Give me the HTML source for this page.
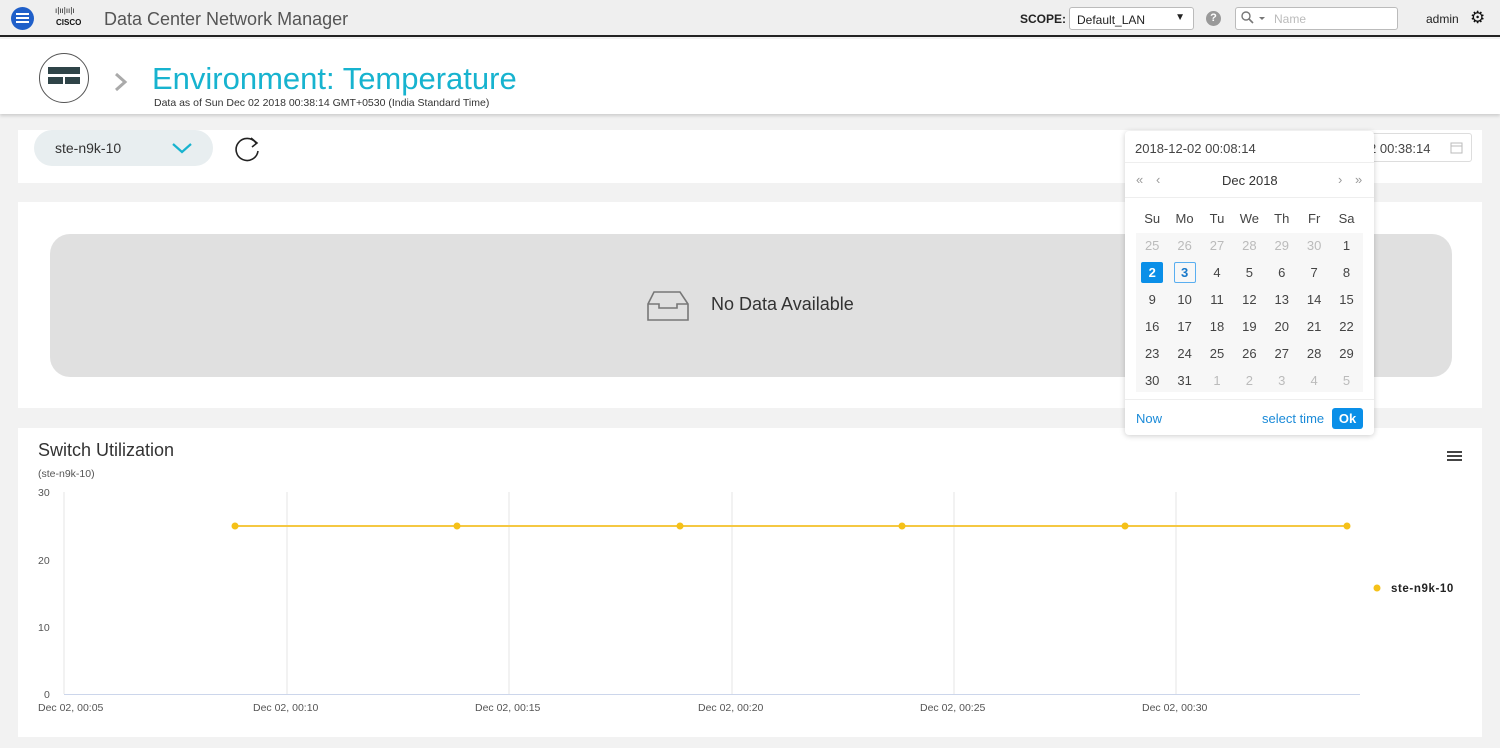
<!DOCTYPE html>
<html><head><meta charset="utf-8"><style>
*{box-sizing:border-box;margin:0;padding:0}
body{width:1500px;height:748px;background:#f2f2f2;font-family:"Liberation Sans",sans-serif;position:relative;overflow:hidden;color:#333}
.abs{position:absolute}
.card{position:absolute;background:#fff}
.cal td{width:32.4px;height:27px;text-align:center;font-size:13px;color:#444}
.cal .g{color:#bbb}
</style></head><body>
<!-- header -->
<div class="abs" style="left:0;top:0;width:1500px;height:37px;background:#efefef;border-bottom:2px solid #222"></div>
<div class="abs" style="left:11px;top:7px;width:23px;height:23px;border-radius:50%;background:#1f5fc9"></div>
<div class="abs" style="left:16px;top:13px;width:13px;height:2px;background:#fff;box-shadow:0 4px 0 #fff,0 8px 0 #fff"></div>
<div class="abs" style="left:55px;top:7px;font-size:8px;letter-spacing:0px;color:#111;line-height:8px">ı|ıı|ıı|ı</div>
<div class="abs" style="left:56px;top:18px;font-size:8px;font-weight:bold;color:#111">CISCO</div>
<div class="abs" style="left:104px;top:9px;font-size:18px;color:#555">Data Center Network Manager</div>
<div class="abs" style="left:1020px;top:12px;font-size:12px;font-weight:bold;color:#222">SCOPE:</div>
<div class="abs" style="left:1069px;top:7px;width:125px;height:23px;border:1px solid #bbb;background:#fff;border-radius:3px;font-size:12px;padding:5px 7px;color:#222">Default_LAN<span style="position:absolute;right:8px;top:4px;font-size:10px">▼</span></div>
<div class="abs" style="left:1206px;top:11px;width:15px;height:15px;border-radius:50%;background:#999;color:#fff;font-size:11px;font-weight:bold;text-align:center;line-height:15px">?</div>
<div class="abs" style="left:1235px;top:7px;width:163px;height:23px;border:1px solid #bbb;background:#fff;border-radius:3px;font-size:12px;color:#bbb;padding:4px 0 0 38px">Name</div>
<svg class="abs" style="left:1241px;top:11px" width="28" height="14"><circle cx="5" cy="5" r="4" fill="none" stroke="#777" stroke-width="1.4"/><path d="M8 8l4 4" stroke="#777" stroke-width="1.6"/><path d="M18 6h6l-3 3z" fill="#777"/></svg>
<div class="abs" style="left:1426px;top:12px;font-size:12px;color:#222">admin</div>
<div class="abs" style="left:1470px;top:8px;font-size:17px;color:#111">⚙</div>
<!-- title band -->
<div class="abs" style="left:0;top:39px;width:1500px;height:75px;background:#fff;box-shadow:0 2px 3px rgba(0,0,0,.15)"></div>
<div class="abs" style="left:39px;top:53px;width:50px;height:50px;border-radius:50%;border:1px solid #555;background:#fff"></div>
<div class="abs" style="left:48px;top:67px;width:32px;height:7px;background:#2f4448"></div>
<div class="abs" style="left:48px;top:77px;width:15px;height:7px;background:#2f4448"></div>
<div class="abs" style="left:65px;top:77px;width:15px;height:7px;background:#2f4448"></div>
<svg class="abs" style="left:113px;top:71px" width="16" height="22"><path d="M3 3l9 8-9 8" fill="none" stroke="#aaa" stroke-width="3"/></svg>
<div class="abs" style="left:152px;top:61px;font-size:31px;color:#17b3cf">Environment: Temperature</div>
<div class="abs" style="left:154px;top:97px;font-size:10.5px;color:#333">Data as of Sun Dec 02 2018 00:38:14 GMT+0530 (India Standard Time)</div>
<!-- card1 -->
<div class="card" style="left:18px;top:130px;width:1464px;height:53px"></div>
<div class="abs" style="left:34px;top:130px;width:179px;height:36px;border-radius:18px;background:#e8eef0"></div>
<div class="abs" style="left:55px;top:140px;font-size:14px;color:#333">ste-n9k-10</div>
<svg class="abs" style="left:171px;top:141px" width="22" height="14"><path d="M2 3l9 8 9-8" fill="none" stroke="#17b3cf" stroke-width="2.2"/></svg>
<svg class="abs" style="left:232px;top:135px" width="32" height="30"><path d="M24 8A11 11 0 1 0 26 16" fill="none" stroke="#222" stroke-width="1.6"/><path d="M19 3l6 5-5 4" fill="none" stroke="#222" stroke-width="1.6"/></svg>
<div class="abs" style="left:1240px;top:133px;width:232px;height:29px;border:1px solid #ddd;border-radius:3px;background:#fff;font-size:13px;color:#444;padding:7px 0 0 128px">2 00:38:14</div>
<svg class="abs" style="left:1450px;top:141px" width="13" height="13"><rect x="1" y="2" width="11" height="10" fill="none" stroke="#bbb"/><path d="M1 5h11" stroke="#bbb"/></svg>
<!-- card2 -->
<div class="card" style="left:18px;top:202px;width:1464px;height:206px"></div>
<div class="abs" style="left:50px;top:234px;width:1402px;height:143px;border-radius:20px;background:#e0e0e0"></div>
<svg class="abs" style="left:645px;top:290px" width="46" height="32"><path d="M9 2h26l8 12v16H3V14z M3 14h11v4h18v-4h11" fill="none" stroke="#777" stroke-width="1.6"/></svg>
<div class="abs" style="left:711px;top:294px;font-size:18px;color:#333">No Data Available</div>
<!-- card3 chart -->
<div class="card" style="left:18px;top:428px;width:1464px;height:309px"></div>
<div class="abs" style="left:38px;top:440px;font-size:18px;color:#333">Switch Utilization</div>
<div class="abs" style="left:38px;top:468px;font-size:10.5px;color:#555">(ste-n9k-10)</div>
<svg class="abs" style="left:0;top:480px" width="1500" height="240" font-family="Liberation Sans" font-size="10.5" fill="#555">
<g stroke="#e6e6e6"><path d="M64 12V214M287 12V214M509 12V214M732 12V214M954 12V214M1176 12V214"/></g>
<path d="M64 214.5H1360" stroke="#ccd6eb"/>
<text x="38" y="16">30</text><text x="38" y="84">20</text><text x="38" y="151">10</text><text x="44" y="218">0</text>
<text x="38" y="231">Dec 02, 00:05</text><text x="253" y="231">Dec 02, 00:10</text><text x="475" y="231">Dec 02, 00:15</text><text x="698" y="231">Dec 02, 00:20</text><text x="920" y="231">Dec 02, 00:25</text><text x="1142" y="231">Dec 02, 00:30</text>
<path d="M235 46H1347" stroke="#f5c842" stroke-width="2"/>
<g fill="#f5c118"><circle cx="235" cy="46" r="3.5"/><circle cx="457" cy="46" r="3.5"/><circle cx="680" cy="46" r="3.5"/><circle cx="902" cy="46" r="3.5"/><circle cx="1125" cy="46" r="3.5"/><circle cx="1347" cy="46" r="3.5"/><circle cx="1377" cy="108" r="3.5"/></g>
<text x="1391" y="112" font-size="11.5" fill="#222" font-weight="bold" letter-spacing=".6">ste-n9k-10</text>
</svg>
<div class="abs" style="left:1447px;top:451px;width:15px;height:2px;background:#444;box-shadow:0 4px 0 #444,0 8px 0 #444"></div>
<!-- datepicker -->
<div class="abs" style="left:1125px;top:131px;width:249px;height:304px;background:#fff;border-radius:4px;box-shadow:0 1px 6px rgba(0,0,0,.2)">
<div style="height:32px;border-bottom:1px solid #eee;font-size:13px;color:#444;padding:10px 0 0 10px">2018-12-02 00:08:14</div>
<div style="height:35px;border-bottom:1px solid #eee;position:relative;font-size:13px">
<span class="abs" style="left:11px;top:9px;color:#999">«</span><span class="abs" style="left:31px;top:9px;color:#999">‹</span>
<span class="abs" style="left:97px;top:10px;color:#333">Dec 2018</span>
<span class="abs" style="left:213px;top:9px;color:#999">›</span><span class="abs" style="left:230px;top:9px;color:#999">»</span></div>
<div class="abs" style="left:11px;top:102px;width:227px;height:159px;background:#f7f7f7"></div>
<table class="cal abs" style="left:11px;top:74px;border-collapse:collapse">
<tr><td>Su</td><td>Mo</td><td>Tu</td><td>We</td><td>Th</td><td>Fr</td><td>Sa</td></tr>
<tr><td class="g">25</td><td class="g">26</td><td class="g">27</td><td class="g">28</td><td class="g">29</td><td class="g">30</td><td>1</td></tr>
<tr><td><span style="display:inline-block;width:22px;height:21px;line-height:21px;background:#0a8fe8;color:#fff;font-weight:bold;border-radius:2px">2</span></td><td><span style="display:inline-block;width:22px;height:21px;line-height:19px;border:1px solid #59aef0;color:#1677c9;font-weight:bold;border-radius:2px">3</span></td><td>4</td><td>5</td><td>6</td><td>7</td><td>8</td></tr>
<tr><td>9</td><td>10</td><td>11</td><td>12</td><td>13</td><td>14</td><td>15</td></tr>
<tr><td>16</td><td>17</td><td>18</td><td>19</td><td>20</td><td>21</td><td>22</td></tr>
<tr><td>23</td><td>24</td><td>25</td><td>26</td><td>27</td><td>28</td><td>29</td></tr>
<tr><td>30</td><td>31</td><td class="g">1</td><td class="g">2</td><td class="g">3</td><td class="g">4</td><td class="g">5</td></tr>
</table>
<div class="abs" style="left:0;top:268px;width:249px;border-top:1px solid #eee"></div>
<div class="abs" style="left:11px;top:280px;font-size:13px;color:#1a8ad8">Now</div>
<div class="abs" style="left:137px;top:280px;font-size:13px;color:#1a8ad8">select time</div>
<div class="abs" style="left:207px;top:277px;width:31px;height:21px;background:#0a8fe8;color:#fff;font-size:13px;font-weight:bold;text-align:center;line-height:21px;border-radius:3px">Ok</div>
</div>
</body></html>
